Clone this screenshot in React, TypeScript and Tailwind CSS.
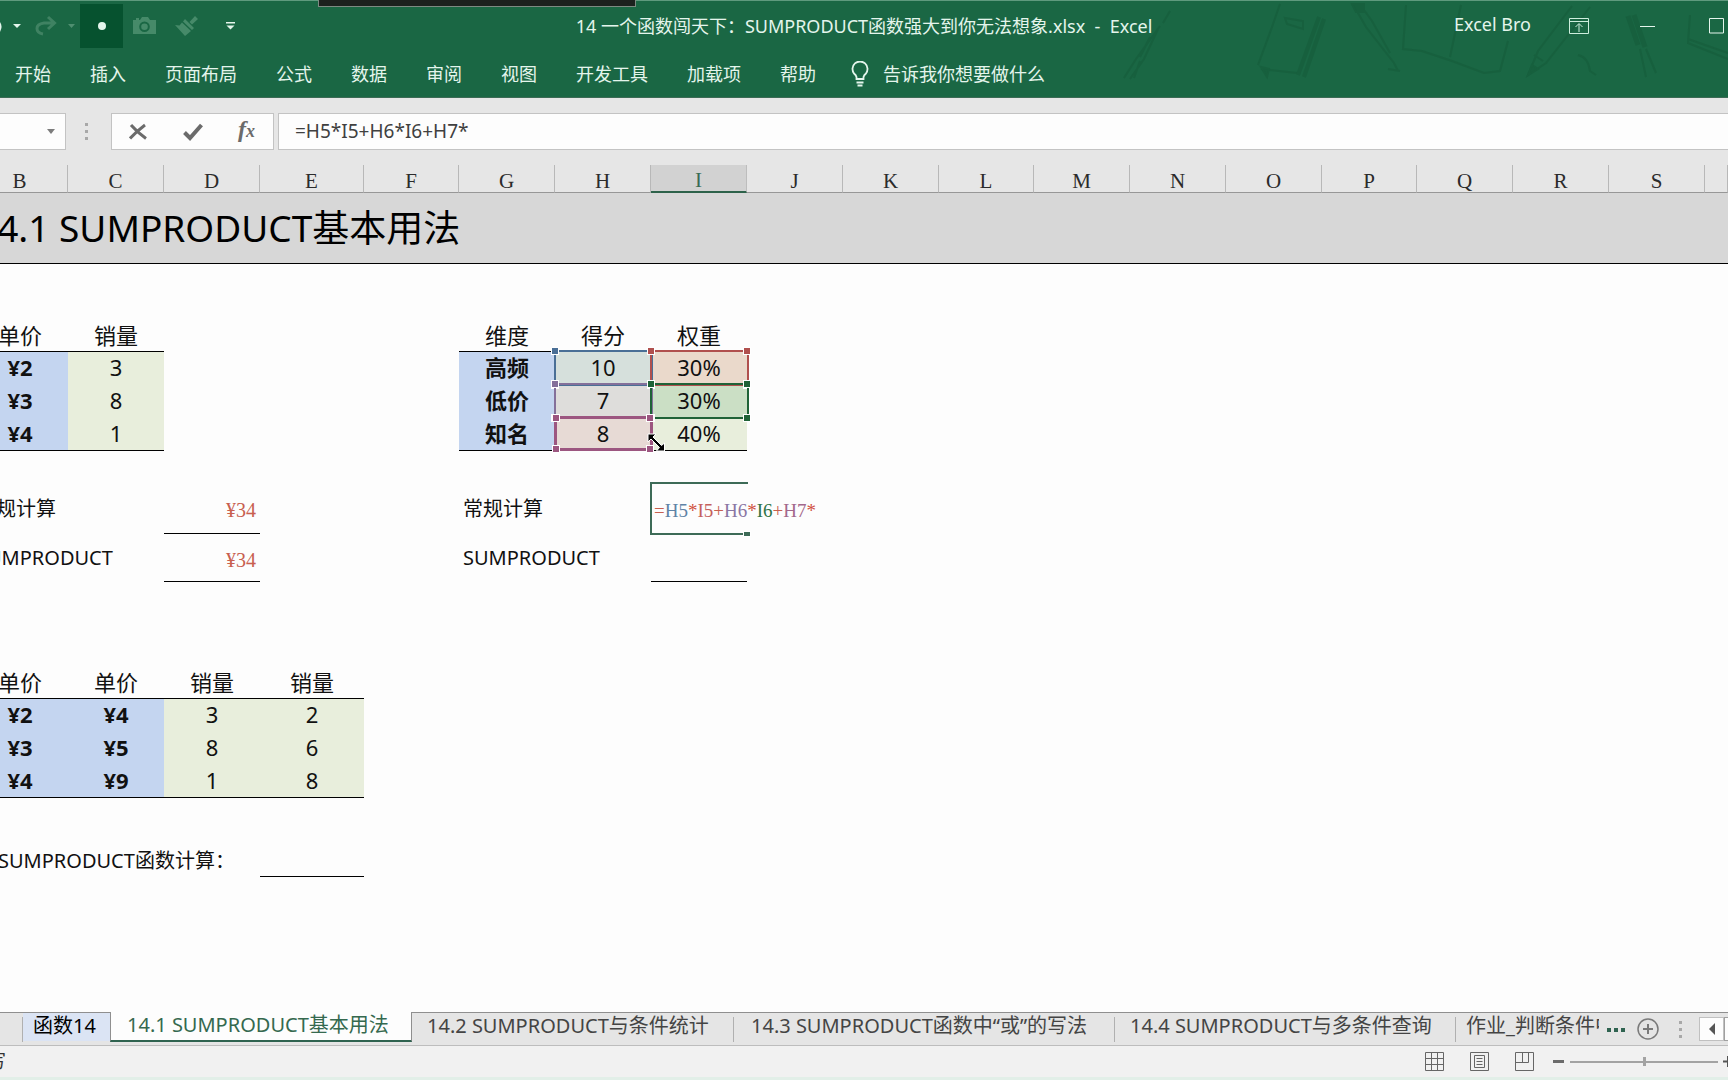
import React from 'react';
import clsx from 'clsx';

const columns = [
  { name: 'B', width: 'w-[96px]' },
  { name: 'C', width: 'w-[96px]' },
  { name: 'D', width: 'w-[96px]' },
  { name: 'E', width: 'w-[104px]' },
  { name: 'F', width: 'w-[95px]' },
  { name: 'G', width: 'w-[96px]' },
  { name: 'H', width: 'w-[96px]' },
  { name: 'I', width: 'w-[96px]' },
  { name: 'J', width: 'w-[96px]' },
  { name: 'K', width: 'w-[96px]' },
  { name: 'L', width: 'w-[95px]' },
  { name: 'M', width: 'w-[96px]' },
  { name: 'N', width: 'w-[96px]' },
  { name: 'O', width: 'w-[96px]' },
  { name: 'P', width: 'w-[95px]' },
  { name: 'Q', width: 'w-[96px]' },
  { name: 'R', width: 'w-[96px]' },
  { name: 'S', width: 'w-[96px]' },
  { name: '', width: '' },
];

const menus = ['开始', '插入', '页面布局', '公式', '数据', '审阅', '视图', '开发工具', '加载项', '帮助'];

const priceRows = [
  { price: '¥2', qty: '3', name: '高频', score: '10', weight: '30%' },
  { price: '¥3', qty: '8', name: '低价', score: '7', weight: '30%' },
  { price: '¥4', qty: '1', name: '知名', score: '8', weight: '40%' },
];

const refs = [
  {
    score: { box: 'border-[#4a6f96] border-2', dot: 'bg-[#4a6f96]', fill: 'bg-[#d6e0dc]' },
    weight: { box: 'border-[#b0504e] border-2', dot: 'bg-[#b0504e]', fill: 'bg-[#ead9cb]' },
  },
  {
    score: { box: 'border-[#84709a] border-2', dot: 'bg-[#84709a]', fill: 'bg-[#dedddb]' },
    weight: { box: 'border-[#1f6237] border-2', dot: 'bg-[#1f6237]', fill: 'bg-[#cbdfc5]' },
  },
  {
    score: { box: 'border-[#9c5680] border-[3px]', dot: 'bg-[#9c5680]', fill: 'bg-[#e7dad5]' },
    weight: null,
  },
];

const mixedRows = [
  ['¥2', '¥4', '3', '2'],
  ['¥3', '¥5', '8', '6'],
  ['¥4', '¥9', '1', '8'],
];

const formula = [
  { text: '=', color: 'text-[#c8604f]' },
  { text: 'H5', color: 'text-[#5f83a6]' },
  { text: '*', color: 'text-[#d0503f]' },
  { text: 'I5', color: 'text-[#c4605c]' },
  { text: '+', color: 'text-[#c8604f]' },
  { text: 'H6', color: 'text-[#8a76a3]' },
  { text: '*', color: 'text-[#d0503f]' },
  { text: 'I6', color: 'text-[#2f7347]' },
  { text: '+', color: 'text-[#c8604f]' },
  { text: 'H7', color: 'text-[#a3688c]' },
  { text: '*', color: 'text-[#d0503f]' },
];

function RefBox({ box, dot }: { box: string; dot: string }) {
  return (
    <span className={clsx('absolute -left-px -top-[2px] -right-[2px] -bottom-px z-10', box)}>
      <span className={clsx('absolute -left-[4px] -top-[4px] size-[6px] outline outline-white', dot)} />
      <span className={clsx('absolute -right-[3px] -top-[4px] size-[6px] outline outline-white', dot)} />
      <span className={clsx('absolute -left-[4px] -bottom-[4px] size-[6px] outline outline-white', dot)} />
      <span className={clsx('absolute -right-[3px] -bottom-[4px] size-[6px] outline outline-white', dot)} />
    </span>
  );
}

function HeaderArt() {
  return (
    <svg
      className="absolute right-0 top-0 h-[97px] w-[628px]"
      viewBox="0 0 628 97"
      fill="none"
      stroke="#155a39"
      strokeWidth="2"
      opacity="0.5"
    >
      <path d="M70 10 63 22M60 25 36 58 24 77M58 28 44 58 30 78M50 36 40 56M40 60 34 77" />
      <path d="M180 3 172 26 158 64M161 68 197 72M185 17l18 3v8l-16-5z" />
      <path d="M161 66l8 2-2 8z" fill="#155a39" />
      <path d="M219 16 198 74M224 18 204 76" strokeWidth="4" />
      <path d="M252 3 258 12 266 26 294 62 298 70M264 9 272 20 290 52M288 68l12 2" />
      <path d="M252 3h12v8h-8z" fill="#155a39" />
      <path d="M306 4 303 48 322 50 352 60 384 72 400 70 408 40M361 4 350 56" />
      <path d="M472 5 438 50 428 74 446 62 490 6M434 54 443 60" />
      <path d="M428 74l4-10 6 4z" fill="#155a39" />
      <path d="M478 54q10 2 12 16l6 4" />
      <path d="M528 15 538 44M534 14 545 46" strokeWidth="5" />
      <path d="M540 48 546 76M546 48 556 72" />
      <path d="M590 14 588 42 628 58M588 38 628 52" />
    </svg>
  );
}

function TitleBar() {
  return (
    <div className="relative grid h-[50px] grid-cols-[1fr_auto_1fr] items-center">
      <div className="flex h-full items-center">
        <button aria-label="撤消" className="flex items-center">
          <svg width="24" height="20" viewBox="0 0 24 20">
            <path d="M0 6q3 4 0 10z" fill="#e4f5ec" />
            <path d="M13 8h8l-4 4z" fill="#e4f5ec" />
          </svg>
        </button>
        <button aria-label="恢复" className="ml-2 flex items-center">
          <svg width="46" height="22" viewBox="0 0 46 22" fill="none" stroke="#3f8262">
            <path d="M11 19Q5 18 5 13.500T12 8H22M16 2 22.500 8 16 14" strokeWidth="3" />
            <path d="M36 9h7l-3.500 4z" fill="#4f8f70" stroke="none" />
          </svg>
        </button>
        <button aria-label="记录" className="ml-[2px] flex h-[44px] w-[43px] items-center justify-center bg-[#06522f]">
          <span className="size-2 rounded-full bg-[#e4f5ec]" />
        </button>
        <button aria-label="照相机" className="ml-[10px]">
          <svg width="23" height="18" viewBox="0 0 23 18">
            <path
              fillRule="evenodd"
              fill="#468a69"
              d="M0 3h3V1h3v2h1l2-3h6l2 3h6v14H0zM11.500 4.500a5.300 5.300 0 1 0 0 10.600 5.300 5.300 0 0 0 0-10.600zm0 2a3.300 3.300 0 1 1 0 6.600 3.300 3.300 0 0 1 0-6.600z"
            />
          </svg>
        </button>
        <button aria-label="格式刷" className="ml-[19px]">
          <svg width="24" height="20" viewBox="0 0 24 20" fill="#468a69">
            <path d="M20 0 23 3 17 8.500 14.500 6zM10 3 19 12 17 14 8 5.500zM7 6.500 16 15 10 20 0 9 4.500 9.500z" />
          </svg>
        </button>
        <button aria-label="自定义快速访问工具栏" className="ml-[27px]">
          <svg width="9" height="8" viewBox="0 0 9 8" fill="#e4f5ec">
            <path d="M0 0h9v1.500H0zM.5 3.500h8l-4 4z" />
          </svg>
        </button>
      </div>
      <h1 className="whitespace-pre pt-[1px] text-[18px]">
        14 一个函数闯天下：SUMPRODUCT函数强大到你无法想象.xlsx  -  Excel
      </h1>
      <div className="flex h-full items-center justify-end pr-1">
        <span className="mr-[38px] pb-[3px] text-[18px]">Excel Bro</span>
        <button aria-label="功能区显示选项" className="mr-[51px]">
          <svg width="20" height="16" viewBox="0 0 20 16" fill="none" stroke="#cdeedd">
            <path d="M.5.5h19v15H.5zM.5 3.500h19M10 14V6M6.500 9 10 5.500 13.500 9" />
          </svg>
        </button>
        <button aria-label="最小化" className="mr-[54px]">
          <svg width="15" height="16" viewBox="0 0 15 16" stroke="#e4f5ec">
            <path d="M0 8.500h15" />
          </svg>
        </button>
        <button aria-label="最大化">
          <svg width="15" height="16" viewBox="0 0 15 16" fill="none" stroke="#e4f5ec">
            <path d="M.5.5h14v14.500H.5z" />
          </svg>
        </button>
      </div>
    </div>
  );
}

function FormulaBar() {
  return (
    <div className="flex h-[37px] text-[#6b6b6b]">
      <button aria-label="名称框" className="flex w-[66px] items-center justify-end border border-l-0 border-[#c3c3c3] bg-[#fdfdfd] pr-[10px]">
        <svg width="8" height="5" viewBox="0 0 8 5" fill="#7c7c7c">
          <path d="M0 0h8L4 5z" />
        </svg>
      </button>
      <div className="flex w-[45px] flex-col items-center justify-center gap-1 pr-1">
        <span className="size-[3px] bg-[#a8a8a8]" />
        <span className="size-[3px] bg-[#a8a8a8]" />
        <span className="size-[3px] bg-[#a8a8a8]" />
      </div>
      <div className="flex w-[163px] items-center border border-[#c3c3c3] bg-[#fdfdfd] pl-[17px]">
        <button aria-label="取消">
          <svg width="18" height="18" viewBox="0 0 18 18" fill="none" stroke="#6b6b6b" strokeWidth="3">
            <path d="M2 2Q8 9 17 15.500M16 2Q8 8 1 15.500" />
          </svg>
        </button>
        <button aria-label="输入" className="ml-[36px]">
          <svg width="20" height="18" viewBox="0 0 20 18" fill="none" stroke="#6b6b6b" strokeWidth="4">
            <path d="M1.500 9.500 7 15 18.500 2" />
          </svg>
        </button>
        <button aria-label="插入函数" className="ml-[35px] pb-1 font-['Liberation_Serif',serif] text-[24px] leading-[28px] font-bold italic">
          f<span className="text-[18px]">x</span>
        </button>
      </div>
      <input
        aria-label="编辑栏"
        defaultValue="=H5*I5+H6*I6+H7*"
        className="ml-[4px] min-w-0 flex-1 border border-r-0 border-[#c3c3c3] bg-[#fdfdfd] pl-4 text-[19px] text-[#404040] outline-none"
      />
    </div>
  );
}

function Sheet() {
  const head = 'border-b border-black pb-[1px] text-center font-normal';
  const label = 'whitespace-nowrap pl-1 text-left text-[20px]';
  const blue = 'bg-[#c4d5f0] pb-[3px] text-center font-bold';
  const green = 'bg-[#e8eedc] pb-[3px] text-center';
  const red = "border-b border-black pr-[4px] pt-1 text-right font-['Liberation_Serif',serif] text-[20px] text-[#c8604f]";

  return (
    <table className="-ml-7 w-[calc(100%+28px)] table-fixed border-separate border-spacing-0 text-[22px] leading-[26px] text-[#111]">
      <colgroup>
        {columns.map((c) => (
          <col key={c.name} className={c.width} />
        ))}
      </colgroup>
      <thead>
        <tr className="h-[28px] bg-[#e6e6e6] font-['Liberation_Serif',serif] text-[21px]">
          {columns.map((c) => (
            <th
              key={c.name}
              className={clsx(
                'border-r font-normal',
                c.name === 'I'
                  ? 'border-r-[#bdbdbd] border-b-2 border-b-[#2d624a] bg-[#d2d2d2] text-[#3a6b54]'
                  : 'border-r-[#b8b8b8] border-b border-b-[#979797] text-[#2b2b2b]'
              )}
            >
              <span className="block h-[24px] leading-[28px]">{c.name}</span>
            </th>
          ))}
        </tr>
      </thead>
      <tbody>
        <tr className="h-[71px] bg-[#d7d7d7]">
          <td colSpan={19} className="border-b border-black text-black">
            <h2 className="pl-1 text-[37px] leading-[50px] whitespace-nowrap">14.1 SUMPRODUCT基本用法</h2>
          </td>
        </tr>
        <tr className="h-[55px]"><td colSpan={19} /></tr>

        <tr className="h-[33px]">
          <th className={head}>单价</th>
          <th className={head}>销量</th>
          <td colSpan={3} />
          <th className={head}>维度</th>
          <th className={head}>得分</th>
          <th className={head}>权重</th>
          <td colSpan={11} />
        </tr>
        {priceRows.map((r, i) => {
          const { score, weight } = refs[i];
          const last = i === 2 && 'border-b border-black';
          return (
            <tr key={r.name} className="h-[33px]">
              <td className={clsx(blue, last)}>{r.price}</td>
              <td className={clsx(green, last)}>{r.qty}</td>
              <td colSpan={3} />
              <td className={clsx(blue, last)}>{r.name}</td>
              <td className={clsx('relative pb-[3px] text-center', score.fill, last, i === 2 && 'z-10')}>
                {r.score}
                <RefBox {...score} />
              </td>
              <td className={clsx('relative pb-[3px] text-center', weight ? weight.fill : 'bg-[#e8eedc]', last)}>
                {r.weight}
                {weight && <RefBox {...weight} />}
              </td>
              <td colSpan={11} className="relative">
                {i === 2 && (
                  <svg className="absolute -left-[100px] top-[15px] z-20" width="20" height="20" viewBox="0 0 20 20">
                    <path
                      d="M1 1h8L6 4 14.500 12.500 17.500 10V18H9.500L12.500 14.500 4 6 1 9z"
                      fill="#000"
                      stroke="#fff"
                      strokeWidth="1"
                    />
                  </svg>
                )}
              </td>
            </tr>
          );
        })}
        <tr className="h-[32px]"><td colSpan={19} /></tr>

        <tr className="h-[51px]">
          <td colSpan={2} className={label}>常规计算</td>
          <td className={red}>¥34</td>
          <td colSpan={2} />
          <td colSpan={2} className={label}>常规计算</td>
          <td className="relative whitespace-nowrap">
            <span className="absolute -inset-x-px -top-px -bottom-px border-y-2 border-l-2 border-[#3d6b57]">
              <span className="absolute -right-[2px] -bottom-[3px] h-[4px] w-[6px] bg-[#3d6b57] outline outline-white" />
            </span>
            <span className="relative block pt-1 pl-[3px] font-['Liberation_Serif',serif] text-[19px]">
              {formula.map((f, i) => (
                <span key={i} className={f.color}>{f.text}</span>
              ))}
            </span>
          </td>
          <td colSpan={11} />
        </tr>
        <tr className="h-[48px]">
          <td colSpan={2} className={label}>SUMPRODUCT</td>
          <td className={red}>¥34</td>
          <td colSpan={2} />
          <td colSpan={2} className={label}>SUMPRODUCT</td>
          <td className="border-b border-black" />
          <td colSpan={11} />
        </tr>
        <tr className="h-[84px]"><td colSpan={19} /></tr>

        <tr className="h-[33px]">
          <th className={head}>单价</th>
          <th className={head}>单价</th>
          <th className={head}>销量</th>
          <th className={head}>销量</th>
          <td colSpan={15} />
        </tr>
        {mixedRows.map((row, i) => (
          <tr key={i} className="h-[33px]">
            {row.map((v, j) => (
              <td key={j} className={clsx(j < 2 ? blue : green, i === 2 && 'border-b border-black')}>{v}</td>
            ))}
            <td colSpan={15} />
          </tr>
        ))}
        <tr className="h-[46px]"><td colSpan={19} /></tr>

        <tr className="h-[33px]">
          <td colSpan={3} className="pl-[26px] text-[20px] whitespace-nowrap">SUMPRODUCT函数计算：</td>
          <td className="border-b border-black" />
          <td colSpan={15} />
        </tr>
      </tbody>
    </table>
  );
}

function SheetTabs() {
  const tab = 'flex h-full items-center whitespace-nowrap pb-[7px] text-[#444]';
  const sep = 'mt-1 h-[25px] w-px self-start bg-[#b0b0b0]';
  return (
    <nav className="flex h-[34px] shrink-0 border-t border-b border-t-[#8f8f8f] border-b-[#bdbdbd] bg-[#e5e5e5] text-[20px] leading-[26px]">
      <span className="w-[22px]" />
      <span className={sep} />
      <button className="flex h-[28px] w-[87px] items-center pb-[3px] pl-[10px] bg-[#dbe4f4] text-black">函数14</button>
      <button className="-mt-px flex h-[30px] w-[302px] items-center border-x border-b-2 border-x-[#8f8f8f] border-b-[#2f6350] bg-[#fdfdfd] pb-[2px] pl-4 text-[#35694f]">
        14.1 SUMPRODUCT基本用法
      </button>
      <button className={clsx(tab, 'w-[321px] pl-[15px]')}>14.2 SUMPRODUCT与条件统计</button>
      <span className={sep} />
      <button className={clsx(tab, 'w-[380px] pl-[17px]')}>14.3 SUMPRODUCT函数中“或”的写法</button>
      <span className={sep} />
      <button className={clsx(tab, 'w-[340px] pl-[15px]')}>14.4 SUMPRODUCT与多条件查询</button>
      <span className={sep} />
      <button className={clsx(tab, 'w-[143px] overflow-hidden pl-[10px]')}>作业_判断条件中</button>
      <button aria-label="更多工作表" className="ml-[8px] flex items-center gap-[3px] pt-[2px]">
        <span className="size-[4px] bg-[#2f6350]" />
        <span className="size-[4px] bg-[#2f6350]" />
        <span className="size-[4px] bg-[#2f6350]" />
      </button>
      <button aria-label="新工作表" className="ml-[12px] flex items-center">
        <svg width="22" height="22" viewBox="0 0 22 22" fill="none" stroke="#7a7a7a">
          <circle cx="11" cy="11" r="10" strokeWidth="1.500" />
          <path d="M11 6v10M6 11h10" strokeWidth="2" />
        </svg>
      </button>
      <span className="ml-[20px] flex flex-col justify-center gap-1">
        <span className="size-[3px] bg-[#a8a8a8]" />
        <span className="size-[3px] bg-[#a8a8a8]" />
        <span className="size-[3px] bg-[#a8a8a8]" />
      </span>
      <button aria-label="向左滚动" className="mt-[4px] ml-[17px] flex h-[24px] w-[25px] items-center justify-center border border-[#c0c0c0] bg-[#fdfdfd]">
        <svg width="6" height="12" viewBox="0 0 6 12" fill="#555">
          <path d="M6 0v12L0 6z" />
        </svg>
      </button>
      <span className="mt-[4px] h-[24px] flex-1 border border-r-0 border-[#a0a0a0] bg-[#fdfdfd]" />
    </nav>
  );
}

function StatusBar() {
  return (
    <footer className="flex h-[34px] shrink-0 items-center border-b-[3px] border-[#e2efe8] bg-[#f1f1f1]">
      <span className="-ml-[12px] text-[18px] text-[#333]">写</span>
      <div className="ml-auto flex items-center">
        <button aria-label="普通" className="mr-[26px]">
          <svg width="19" height="19" viewBox="0 0 19 19" fill="none" stroke="#666">
            <path d="M.5.5h18v18H.5zM6.500.5v18M12.500.5v18M.5 6.500h18M.5 12.500h18" />
          </svg>
        </button>
        <button aria-label="页面布局" className="mr-[26px]">
          <svg width="19" height="19" viewBox="0 0 19 19" fill="none" stroke="#666">
            <path d="M.5.5h18v18H.5zM4.500 3.500h10v12h-10zM6.500 6.500h6M6.500 9.500h6M6.500 12.500h6" />
          </svg>
        </button>
        <button aria-label="分页预览" className="mr-[19px]">
          <svg width="19" height="19" viewBox="0 0 19 19" fill="none" stroke="#666">
            <path d="M.5.5h18v18H.5zM.5 10.500h13M7.500.5v10M13.500.5v10" />
          </svg>
        </button>
        <button aria-label="缩小" className="mr-[6px] h-[3px] w-[11px] bg-[#6b6b6b]" />
        <input
          type="range"
          aria-label="显示比例"
          defaultValue={50}
          className="h-[9px] w-[148px] appearance-none bg-[linear-gradient(#a3a3a3,#a3a3a3)] bg-[length:100%_2px] bg-center bg-no-repeat [&::-webkit-slider-thumb]:h-[9px] [&::-webkit-slider-thumb]:w-[3px] [&::-webkit-slider-thumb]:appearance-none [&::-webkit-slider-thumb]:bg-[#a3a3a3]"
        />
        <button aria-label="放大" className="ml-[5px] w-[5px] overflow-hidden">
          <svg width="11" height="11" viewBox="0 0 11 11" stroke="#555" strokeWidth="2">
            <path d="M0 5.500h11M5 0v11" />
          </svg>
        </button>
      </div>
    </footer>
  );
}

export default function App() {
  return (
    <div className="flex h-screen flex-col overflow-hidden bg-[#fdfdfd] font-['Noto_Sans','Noto_Sans_CJK_SC',sans-serif]">
      <header className="relative border-t border-b border-t-[#5f9a7e] border-b-[#3c6b55] bg-[#1a6744] text-[#e4f5ec]">
        <HeaderArt />
        <span className="absolute left-[318px] -top-px h-[7px] w-[318px] border border-t-0 border-[#7d8a82] bg-[#1c211e]" />
        <TitleBar />
        <nav className="relative flex h-[46px] items-center gap-[39px] pl-[15px] text-[18px] whitespace-nowrap">
          {menus.map((m) => (
            <button key={m}>{m}</button>
          ))}
          <button className="-ml-[6px] flex items-center gap-[14px] pl-[2px]">
            <svg width="18" height="26" viewBox="0 0 18 26" fill="none" stroke="#e4f5ec" strokeWidth="1.800">
              <path d="M5.500 18V16Q5 14 3 12.500A7.500 7.500 0 1 1 15 12.500Q13 14 12.500 16V18zM5.500 21.500h7M6.500 24.500h5" />
            </svg>
            告诉我你想要做什么
          </button>
        </nav>
      </header>
      <div className="bg-[#e6e6e6] pt-[15px] pb-[15px]">
        <FormulaBar />
      </div>
      <main className="min-h-0 flex-1 overflow-hidden">
        <Sheet />
      </main>
      <SheetTabs />
      <StatusBar />
    </div>
  );
}
